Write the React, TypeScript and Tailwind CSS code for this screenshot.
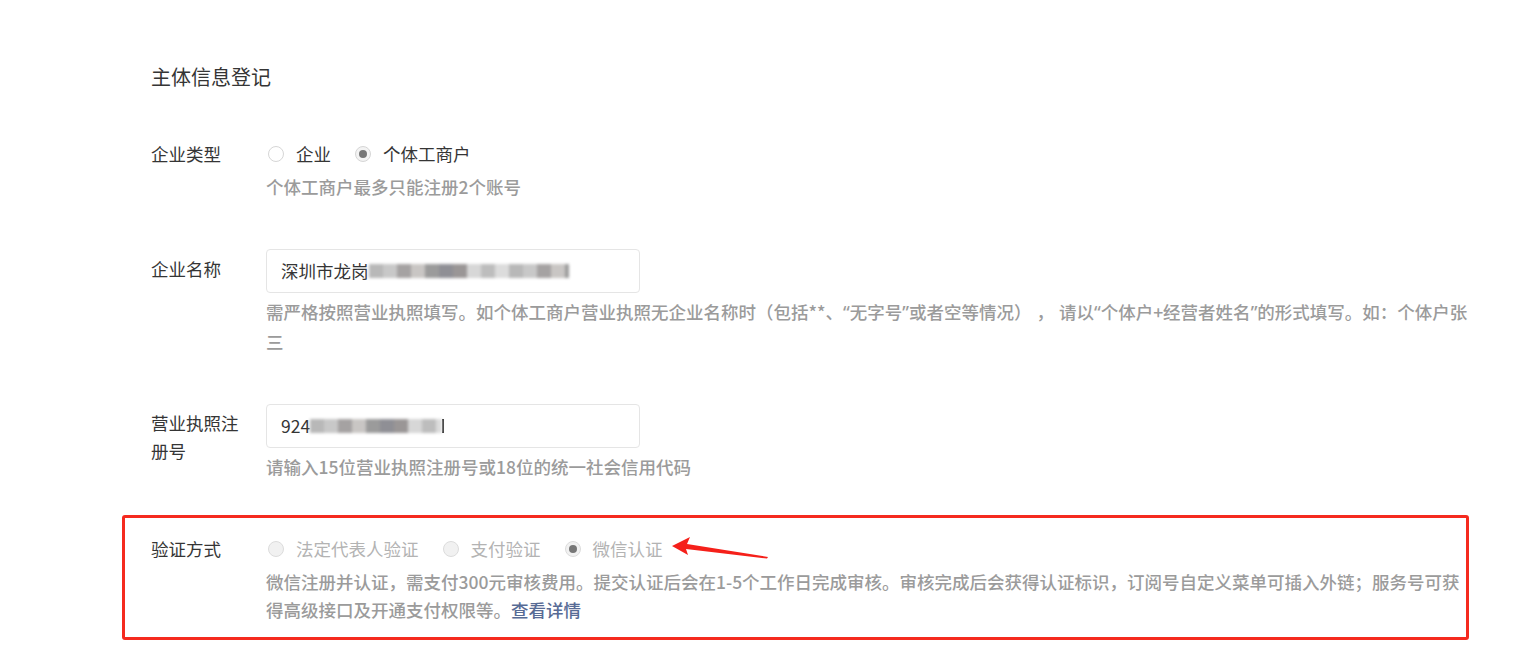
import React from "react";

function Radio({ checked, disabled, label }: { checked?: boolean; disabled?: boolean; label: string }) {
  return (
    <label className="flex items-center">
      <span
        className={
          "ml-[2px] flex h-[16px] w-[16px] items-center justify-center rounded-full border " +
          (disabled ? "border-[#dcdcdc] bg-[#f1f1f1]" : checked ? "border-[#d6d6d6] bg-[#f3f3f3]" : "border-[#d6d6d6] bg-white")
        }
      >
        {checked && <span className="h-[8px] w-[8px] rounded-full bg-[#777777]" />}
      </span>
      <span className={"ml-[12px] " + (disabled ? "text-[#b3b3b3]" : "text-[#353535]")}>{label}</span>
    </label>
  );
}

function Blur({ w }: { w: number }) {
  const cells = ["#b8b8b8", "#c9c6c4", "#9a9696", "#dcdcdc", "#a5a2a2", "#8f8f95", "#bdbdbd", "#c8c8c8", "#9b9b9b", "#d7d7d7"];
  return (
    <span className="inline-flex h-[14px] overflow-hidden blur-[1.5px]" style={{ width: w }}>
      {Array.from({ length: Math.ceil(w / 14) }).map((_, i) => (
        <span key={i} className="h-full w-[14px] shrink-0" style={{ background: cells[(i * 7) % cells.length] }} />
      ))}
    </span>
  );
}

function Q({ c }: { c: string }) {
  return <span className="font-['Noto_Sans','Liberation_Sans',sans-serif]">{c}</span>;
}

export default function App() {
  return (
    <div className="min-h-[657px] w-[1526px] bg-white font-['Noto_Sans_CJK_SC','Noto_Sans',sans-serif] text-[17.5px] text-[#353535]">
      <div className="ml-[122px] w-[1347px] pt-[63px]">
        <div className="pl-[29px] text-[20px] leading-[28px] text-[#353535]">主体信息登记</div>

        {/* 企业类型 */}
        <div className="mt-[49px] flex pl-[29px]">
          <div className="w-[115px] shrink-0 leading-[28px]">企业类型</div>
          <div className="flex flex-col">
            <div className="flex h-[28px] items-center gap-[22px] leading-[28px]">
              <Radio label="企业" />
              <Radio label="个体工商户" checked />
            </div>
            <div className="mt-[5px] font-medium leading-[28px] text-[#9b9b9b]">个体工商户最多只能注册2个账号</div>
          </div>
        </div>

        {/* 企业名称 */}
        <div className="mt-[48px] flex pl-[29px]">
          <div className="mt-[6px] w-[115px] shrink-0 leading-[28px]">企业名称</div>
          <div className="flex w-[1204px] flex-col">
            <div className="flex h-[44px] w-[374px] items-center rounded-[4px] border border-[#e5e5e5] px-[14px] leading-[28px]">
              <span>深圳市龙岗</span>
              <Blur w={200} />
            </div>
            <div className="mt-[4px] font-medium leading-[29px] text-[#9b9b9b]">
              需严格按照营业执照填写。如个体工商户营业执照无企业名称时（包括**、<Q c="“" />无字号<Q c="”" />或者空等情况）<span className="inline-block w-[5px]" />，<span className="inline-block w-[5px]" />请以<Q c="“" />个体户+经营者姓名<Q c="”" />的形式填写。如：个体户张三
            </div>
          </div>
        </div>

        {/* 营业执照注册号 */}
        <div className="mt-[48px] flex pl-[29px]">
          <div className="mt-[5px] w-[96px] shrink-0 leading-[28px]">营业执照注册号</div>
          <div className="ml-[19px] flex w-[1204px] flex-col">
            <div className="flex h-[44px] w-[374px] items-center rounded-[4px] border border-[#e5e5e5] px-[14px] leading-[28px]">
              <span>924</span>
              <Blur w={132} />
              <span className="h-[14px] w-[2px] bg-[#333]" />
            </div>
            <div className="mt-[5px] font-medium leading-[28px] text-[#9b9b9b]">请输入15位营业执照注册号或18位的统一社会信用代码</div>
          </div>
        </div>

        {/* 验证方式 */}
        <div className="relative mt-[34px] flex rounded-[3px] border-[3px] border-[#f52a1f] pb-[13px] pl-[26px] pt-[17px]">
          <div className="w-[115px] shrink-0 leading-[28px]">验证方式</div>
          <div className="flex w-[1204px] flex-col">
            <div className="flex h-[28px] items-center gap-[22px] leading-[28px]">
              <Radio label="法定代表人验证" disabled />
              <Radio label="支付验证" disabled />
              <Radio label="微信认证" disabled checked />
            </div>
            <div className="mt-[5px] font-medium leading-[28px] text-[#9b9b9b]">
              微信注册并认证，需支付300元审核费用。提交认证后会在1-5个工作日完成审核。审核完成后会获得认证标识，订阅号自定义菜单可插入外链；服务号可获得高级接口及开通支付权限等。<span className="text-[#576b95]">查看详情</span>
            </div>
          </div>
          <svg className="absolute left-[543px] top-[15px]" width="104" height="30" viewBox="0 0 104 30">
            <path d="M4 13 L22 4 L19 11 L100 24 L99 25.5 L18 16 L20 22 Z" fill="#f5201a" />
          </svg>
        </div>
      </div>
    </div>
  );
}
